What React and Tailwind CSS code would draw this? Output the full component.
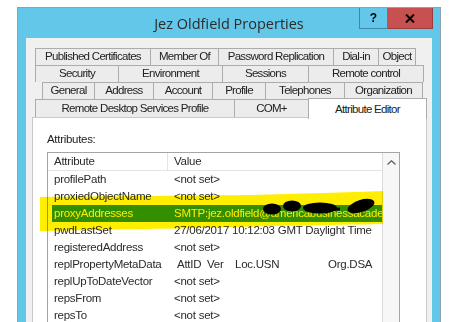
import React from "react";

const tabBase =
  "h-[17px] flex items-center justify-center border-t border-l border-[#acacac] bg-[#ececec] whitespace-nowrap";

function Tab({ w, children, last }) {
  return (
    <div className={`${tabBase} ${last ? "border-r" : ""}`} style={{ width: w }}>
      {children}
    </div>
  );
}

const rows = [
  ["profilePath", "<not set>"],
  ["proxiedObjectName", "<not set>"],
  ["proxyAddresses", "SMTP:jez.oldfield@americabusinessacademy.com", true],
  ["pwdLastSet", "27/06/2017 10:12:03 GMT Daylight Time"],
  ["registeredAddress", "<not set>"],
  ["replPropertyMetaData", "meta"],
  ["replUpToDateVector", "<not set>"],
  ["repsFrom", "<not set>"],
  ["repsTo", "<not set>"],
];

export default function App() {
  return (
    <div
      className="w-[463px] h-[322px] overflow-hidden bg-white"
      style={{ fontFamily: '"Liberation Sans", Arial, sans-serif' }}
    >
      <div className="ml-[17px] mt-[7px] w-[424px] h-[360px] border border-[#8aa3ad] bg-[#63c7ea] flex flex-col">
        {/* title bar */}
        <div className="h-[30px] shrink-0 grid grid-cols-[1fr_auto_1fr]">
          <div />
          <div
            className="self-center text-[14.5px] text-[#2b2b2b] pt-[1px]"
            style={{ fontFamily: '"Open Sans", "Noto Sans", sans-serif' }}
          >
            Jez Oldfield Properties
          </div>
          <div className="flex justify-end items-start mr-[7px]">
            <div className="w-[29px] h-[21px] border border-[#3b88a8] border-t-0 bg-[#63c7ea] flex items-center justify-center text-[12px] font-bold text-black">
              ?
            </div>
            <div className="w-[45px] h-[21px] border border-[#9c3b3b] border-t-0 border-l-0 bg-[#c75050] flex items-center justify-center">
              <svg width="10" height="9" viewBox="0 0 10 9">
                <path d="M1 0.5 L9 8.5 M9 0.5 L1 8.5" stroke="#000" strokeWidth="2" />
              </svg>
            </div>
          </div>
        </div>

        {/* content */}
        <div className="mx-[8px] flex-1 bg-[#f0f0f0] pt-[10px] text-[11.5px] text-[#222] tracking-[-0.7px]">
          <div className="ml-[9px] flex">
            <Tab w={115}>Published Certificates</Tab>
            <Tab w={68}>Member Of</Tab>
            <Tab w={115}>Password Replication</Tab>
            <Tab w={45}>Dial-in</Tab>
            <Tab w={38} last>Object</Tab>
          </div>
          <div className="ml-[9px] flex">
            <Tab w={83}>Security</Tab>
            <Tab w={104}>Environment</Tab>
            <Tab w={86}>Sessions</Tab>
            <Tab w={116} last>Remote control</Tab>
          </div>
          <div className="ml-[16px] flex">
            <Tab w={52}>General</Tab>
            <Tab w={59}>Address</Tab>
            <Tab w={59}>Account</Tab>
            <Tab w={53}>Profile</Tab>
            <Tab w={79}>Telephones</Tab>
            <Tab w={79} last>Organization</Tab>
          </div>
          <div className="ml-[9px] flex items-end h-[18px]">
            <div className={`${tabBase} h-[18px]`} style={{ width: 199 }}>
              Remote Desktop Services Profile
            </div>
            <div className={`${tabBase} h-[18px]`} style={{ width: 74 }}>
              COM+
            </div>
            <div className="w-[119px] h-[21px] -mb-[2px] relative z-10 border border-b-0 border-[#acacac] bg-white flex justify-center pt-[2px] whitespace-nowrap">
              Attribute Editor
            </div>
          </div>

          {/* panel */}
          <div className="ml-[6px] w-[395px] h-[240px] border border-[#c9c9c9] bg-white relative pt-[13px] pl-[14px]">
            <div className="tracking-[-0.3px] text-[11.5px]">Attributes:</div>
            <div className="mt-[4px] w-[353px] h-[210px] border border-[#a5a5a5] flex tracking-[-0.25px] text-[11.5px] text-[#2a2a2a]">
              <div className="flex-1 min-w-0 overflow-hidden flex flex-col">
                <div className="h-[18px] border-b border-[#e3e3e3] flex items-center">
                  <div className="w-[120px] h-full border-r border-[#e3e3e3] pl-[6px] flex items-center">
                    Attribute
                  </div>
                  <div className="pl-[6px]">Value</div>
                </div>
                {rows.map(([a, v, sel]) => (
                  <div key={a} className="h-[17px] shrink-0 pl-[4px] flex">
                    <div
                      className={`flex-1 min-w-0 flex items-center whitespace-nowrap overflow-hidden ${
                        sel ? "bg-[#3399ff] text-white" : ""
                      }`}
                    >
                      <div className="w-[116px] shrink-0 pl-[2px]">{a}</div>
                      <div className="pl-[6px]">
                        {v === "meta" ? (
                          <div className="flex pl-[3px]">
                            <span className="w-[30px]">AttID</span>
                            <span className="w-[28px]">Ver</span>
                            <span className="w-[93px]">Loc.USN</span>
                            <span>Org.DSA</span>
                          </div>
                        ) : (
                          v
                        )}
                      </div>
                    </div>
                  </div>
                ))}
              </div>
              <div className="w-[17px] shrink-0 border-l border-[#dcdcdc] bg-[#f7f7f7] flex justify-center pt-[7px]">
                <svg width="9" height="5" viewBox="0 0 9 5">
                  <path d="M0.5 4.5 L4.5 0.8 L8.5 4.5" fill="none" stroke="#606060" strokeWidth="1.3" />
                </svg>
              </div>
            </div>

            {/* highlighter + redaction overlay */}
            <svg
              className="absolute left-0 top-0 mix-blend-multiply pointer-events-none"
              width="395"
              height="240"
              viewBox="33 118 395 240"
            >
              <path
                d="M40 197 C100 196 180 196 250 195 C300 194 350 192 383 191 L383 224 C330 225 260 226 200 228 C140 229 90 230 40 231 Z"
                fill="#ffee00"
              />
              <ellipse cx="272" cy="209" rx="9" ry="5.5" fill="#000" />
              <ellipse cx="292" cy="206" rx="9" ry="5.5" fill="#000" />
              <ellipse cx="320" cy="208" rx="17" ry="5.5" fill="#000" />
              <ellipse cx="361" cy="206" rx="14" ry="6" fill="#000" transform="rotate(-18 361 206)" />
              <path d="M305 210 L340 209" stroke="#000" strokeWidth="3" />
            </svg>
          </div>
        </div>
      </div>
    </div>
  );
}
